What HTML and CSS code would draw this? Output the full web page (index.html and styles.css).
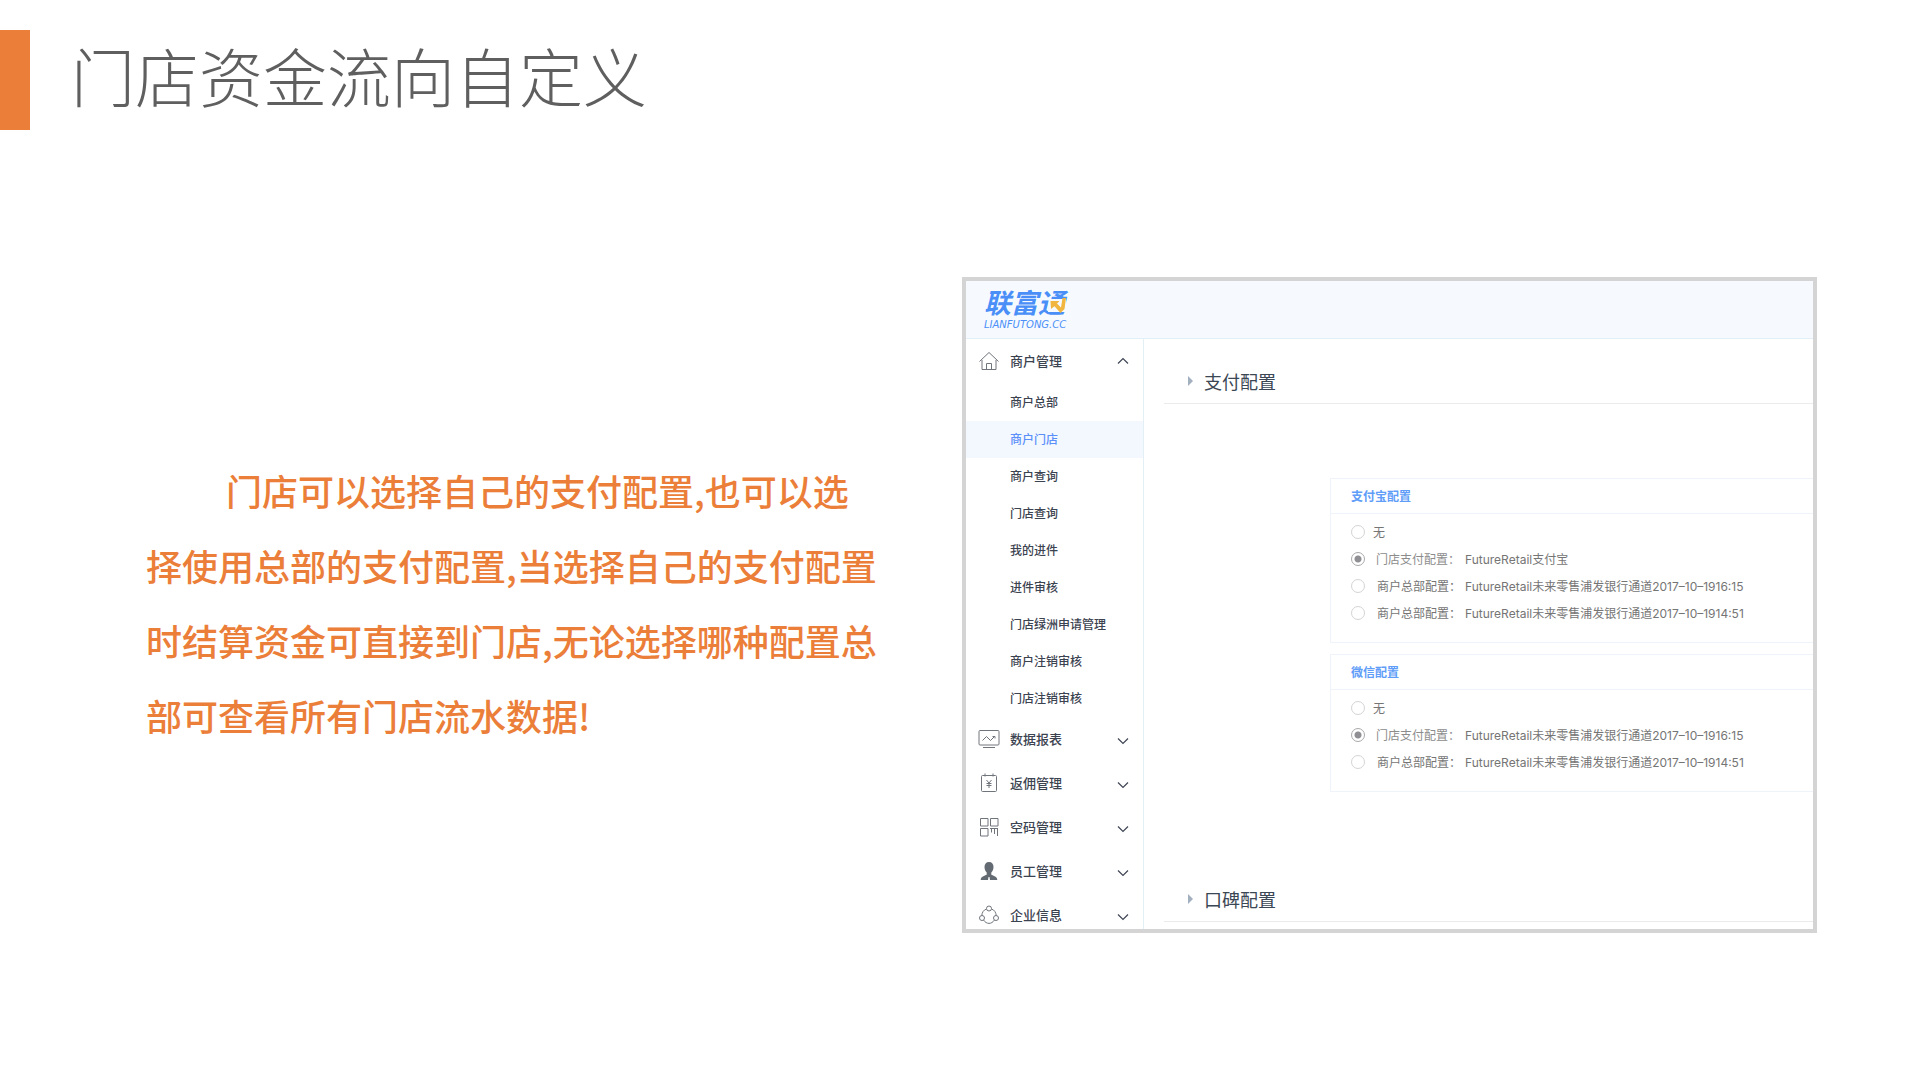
FILE: index.html
```html
<!DOCTYPE html>
<html lang="zh-CN">
<head>
<meta charset="utf-8">
<meta name="viewport" content="width=device-width, initial-scale=1">
<title>门店资金流向自定义</title>
<link rel="stylesheet" href="styles.css">
</head>
<body>
<header class="slide-header">
  <h1 class="slide-title">门店资金流向自定义</h1>
</header>
<main class="slide-body">
  <p class="intro">门店可以选择自己的支付配置,也可以选择使用总部的支付配置,当选择自己的支付配置时结算资金可直接到门店,无论选择哪种配置总部可查看所有门店流水数据!</p>

  <div class="app">
    <div class="app-bar">
      <a class="logo" href="#">
        <span class="logo-name">联富通</span>
        <span class="logo-domain">LIANFUTONG.CC</span>
        <svg class="logo-arrow" viewBox="0 0 18 17" aria-hidden="true"><path class="arrow-plate" d="M1 2h17v13H0z"/><path class="arrow-fill" d="M2.500 4h9L9 6.500l4 4L14.500 1H18l-1.500 11-4 4L6.500 9.200 3 12z"/></svg>
      </a>
    </div>
    <div class="app-body">
      <nav class="sidebar">
        <button class="group" type="button" aria-expanded="true">
          <svg class="icon" viewBox="0 0 22 20"><path d="M1.500 10.500 11 1.500l9.500 9M4 9v9.500h14V9M8.500 18.500v-6h5v6"/></svg>
          <span class="group-name">商户管理</span>
          <svg class="chevron" viewBox="0 0 12 8"><path d="M1 6.500 6 1.500l5 5"/></svg>
        </button>
        <ul class="submenu">
          <li><a class="item" href="#">商户总部</a></li>
          <li><a class="item item-active" href="#">商户门店</a></li>
          <li><a class="item" href="#">商户查询</a></li>
          <li><a class="item" href="#">门店查询</a></li>
          <li><a class="item" href="#">我的进件</a></li>
          <li><a class="item" href="#">进件审核</a></li>
          <li><a class="item" href="#">门店绿洲申请管理</a></li>
          <li><a class="item" href="#">商户注销审核</a></li>
          <li><a class="item" href="#">门店注销审核</a></li>
        </ul>
        <button class="group" type="button" aria-expanded="false">
          <svg class="icon" viewBox="0 0 22 20"><rect x="1" y="1.500" width="20" height="14.500" rx="1"/><path d="M4.500 11.500 8.500 7.500l4 4 4-4M14.500 7.500h2.500v2M5 18.500h12"/></svg>
          <span class="group-name">数据报表</span>
          <svg class="chevron" viewBox="0 0 12 8"><path d="M1 1.500l5 5 5-5"/></svg>
        </button>
        <button class="group" type="button" aria-expanded="false">
          <svg class="icon" viewBox="0 0 22 20"><rect x="3.500" y="2.500" width="15" height="16" rx="1"/><path d="M7 .5v3M15 .5v3M8.500 7l2.500 3 2.500-3M11 10v5M8.500 10.500h5M8.500 12.500h5"/></svg>
          <span class="group-name">返佣管理</span>
          <svg class="chevron" viewBox="0 0 12 8"><path d="M1 1.500l5 5 5-5"/></svg>
        </button>
        <button class="group" type="button" aria-expanded="false">
          <svg class="icon" viewBox="0 0 22 20"><path d="M2.500 1.500h7.500v7.500H2.500zM12.500 1.500H20v7.500h-7.500zM2.500 11.500h7.500V19H2.500zM12 11.500h8M13.500 11.500v4M16.500 11.500v5.500M19.500 11.500V19"/></svg>
          <span class="group-name">空码管理</span>
          <svg class="chevron" viewBox="0 0 12 8"><path d="M1 1.500l5 5 5-5"/></svg>
        </button>
        <button class="group" type="button" aria-expanded="false">
          <svg class="icon icon-solid" viewBox="0 0 22 20"><path d="M11 1c3 0 4.500 2 4.500 5 0 2.500-1 4.500-2.200 5.500v2.200c2 1 6 1.600 6 5.300H12l-.5-3h-1l-.5 3H2.700c0-3.700 4-4.300 6-5.300v-2.200C7.500 10.500 6.500 8.500 6.500 6c0-3 1.500-5 4.500-5z"/></svg>
          <span class="group-name">员工管理</span>
          <svg class="chevron" viewBox="0 0 12 8"><path d="M1 1.500l5 5 5-5"/></svg>
        </button>
        <button class="group" type="button" aria-expanded="false">
          <svg class="icon" viewBox="0 0 22 20"><circle cx="11" cy="3.500" r="2.500"/><circle cx="4" cy="13" r="2.500"/><circle cx="18" cy="13" r="2.500"/><path d="M8.500 4C5.500 5 4 7.500 3.800 10.500M13.500 4c3 1 4.500 3.500 4.700 6.500M5.500 15c3 4.500 8 4.500 11 0"/></svg>
          <span class="group-name">企业信息</span>
          <svg class="chevron" viewBox="0 0 12 8"><path d="M1 1.500l5 5 5-5"/></svg>
        </button>
      </nav>

      <div class="content">
        <h2 class="section-title"><svg class="triangle" viewBox="0 0 5 10"><path d="M0 0l5 5-5 5z"/></svg>支付配置</h2>
        <div class="cards">
          <fieldset class="card">
            <legend class="card-title">支付宝配置</legend>
            <div class="options">
              <label class="option"><input class="radio" type="radio" name="alipay">无</label>
              <label class="option option-store"><input class="radio" type="radio" name="alipay" checked><span class="source">门店支付配置：</span>FutureRetail支付宝</label>
              <label class="option"><input class="radio" type="radio" name="alipay"><span class="source">商户总部配置：</span>FutureRetail未来零售浦发银行通道2017–10–1916:15</label>
              <label class="option"><input class="radio" type="radio" name="alipay"><span class="source">商户总部配置：</span>FutureRetail未来零售浦发银行通道2017–10–1914:51</label>
            </div>
          </fieldset>
          <fieldset class="card">
            <legend class="card-title">微信配置</legend>
            <div class="options">
              <label class="option"><input class="radio" type="radio" name="wechat">无</label>
              <label class="option option-store"><input class="radio" type="radio" name="wechat" checked><span class="source">门店支付配置：</span>FutureRetail未来零售浦发银行通道2017–10–1916:15</label>
              <label class="option"><input class="radio" type="radio" name="wechat"><span class="source">商户总部配置：</span>FutureRetail未来零售浦发银行通道2017–10–1914:51</label>
            </div>
          </fieldset>
        </div>
        <h2 class="section-title"><svg class="triangle" viewBox="0 0 5 10"><path d="M0 0l5 5-5 5z"/></svg>口碑配置</h2>
      </div>
    </div>
  </div>
</main>
</body>
</html>
```
FILE: styles.css
```css
* {
  box-sizing: border-box;
}

body {
  margin: 0;
  background: #fff;
  font-family: "Liberation Sans", "Noto Sans CJK SC", sans-serif;
}

.slide-header {
  height: 100px;
  margin-top: 30px;
  padding-left: 41px;
  border-left: 30px solid #eb7e39;
}

.slide-title {
  margin: 0;
  color: #5f5f5f;
  font-family: "Noto Sans CJK SC", sans-serif;
  font-size: 64px;
  font-weight: 300;
  line-height: 88px;
}

.slide-body {
  display: grid;
  grid-template-columns: minmax(0, 734fr) minmax(0, 855fr);
  gap: 82px;
  align-items: center;
  margin-top: 147px;
  padding: 0 103px 0 146px;
}

.intro {
  margin: 0;
  padding-bottom: 4px;
  color: #eb7e39;
  font-family: "Noto Sans CJK SC", sans-serif;
  font-size: 36px;
  font-weight: 500;
  line-height: 75px;
  text-indent: 80px;
}

.app {
  display: flex;
  flex-direction: column;
  height: 656px;
  overflow: hidden;
  border: 4px solid #d4d4d4;
}

.app-bar {
  flex: none;
  height: 58px;
  padding: 6px 18px;
  border-bottom: 1px solid #e3eff6;
  background: #f6faff;
}

.logo {
  display: inline-flex;
  position: relative;
  flex-direction: column;
  color: #4a8ff7;
  font-style: italic;
  text-decoration: none;
}

.logo-name {
  font-family: "Noto Sans CJK SC", sans-serif;
  font-size: 27px;
  font-weight: 700;
  line-height: 30px;
}

.logo-domain {
  margin-top: 2px;
  font-family: "DejaVu Sans", sans-serif;
  font-size: 10px;
  line-height: 12px;
}

.logo-arrow {
  position: absolute;
  top: 10px;
  right: 0;
  width: 18px;
  height: 17px;
}

.arrow-plate {
  fill: #f6faff;
}

.arrow-fill {
  fill: #f0b63f;
}

.app-body {
  display: flex;
  flex: 1;
  min-height: 0;
}

.sidebar {
  flex: none;
  width: 178px;
  border-right: 1px solid #e3eff6;
}

.group {
  display: flex;
  align-items: center;
  width: 100%;
  height: 44px;
  padding: 0 14px 0 12px;
  border: 0;
  background: none;
  color: #3c4350;
  font: inherit;
  font-size: 13px;
  font-weight: 500;
  text-align: left;
}

.group-name {
  flex: 1;
  padding-bottom: 2px;
  margin-left: 10px;
}

.icon {
  width: 22px;
  height: 20px;
  fill: none;
  stroke: #70757c;
}

.icon-solid {
  fill: #646a72;
  stroke: none;
}

.chevron {
  width: 12px;
  height: 8px;
  margin-top: 4px;
  fill: none;
  stroke: #3f4653;
  stroke-width: 1.2;
}

.group[aria-expanded="true"] .chevron {
  margin-top: 0;
}

.submenu {
  margin: 0;
  padding: 1px 0 0;
  list-style: none;
}

.item {
  display: block;
  height: 37px;
  padding-left: 44px;
  color: #3c4350;
  font-size: 12px;
  font-weight: 500;
  line-height: 39px;
  text-decoration: none;
}

.item-active {
  background: #f3f8ff;
  color: #5b8ff9;
}

.content {
  flex: 1;
  min-width: 0;
  padding-left: 20px;
  overflow: hidden;
}

.section-title {
  display: flex;
  align-items: center;
  height: 65px;
  margin: 0;
  padding: 20px 0 0 24px;
  border-bottom: 1px solid #ebebeb;
  color: #3b4754;
  font-size: 18px;
  font-weight: 400;
}

.triangle {
  width: 5px;
  height: 10px;
  margin-right: 11px;
  fill: #a3b0bf;
}

.cards {
  display: flex;
  flex-direction: column;
  gap: 11px;
  margin: 74px 0 65px 166px;
}

.card {
  min-width: 0;
  margin: 0;
  padding: 0;
  border: 1px solid #eef4fa;
  border-right: 0;
}

.card-title {
  float: left;
  width: 100%;
  height: 35px;
  padding: 0 20px;
  border-bottom: 1px solid #eef4fa;
  color: #609df8;
  font-size: 12px;
  font-weight: 700;
  line-height: 36px;
}

.options {
  clear: both;
  padding: 4px 0 16px 20px;
}

.option {
  display: flex;
  align-items: center;
  height: 27px;
  color: #757575;
  font-family: Inter, "Noto Sans CJK SC", sans-serif;
  font-size: 12px;
  white-space: nowrap;
}

.radio {
  flex: none;
  width: 14px;
  height: 14px;
  margin: 0 8px 0 0;
  border: 1px solid #d4d4d4;
  border-radius: 50%;
  appearance: none;
  background: #fff;
}

.radio:checked {
  border-color: #a9a9ac;
  background: radial-gradient(circle, #8f8f94 3px, #fff 4px);
}

.source {
  width: 92px;
  padding-left: 4px;
}

.option-store .source {
  padding-left: 3px;
  color: #8c8c8c;
}
```
